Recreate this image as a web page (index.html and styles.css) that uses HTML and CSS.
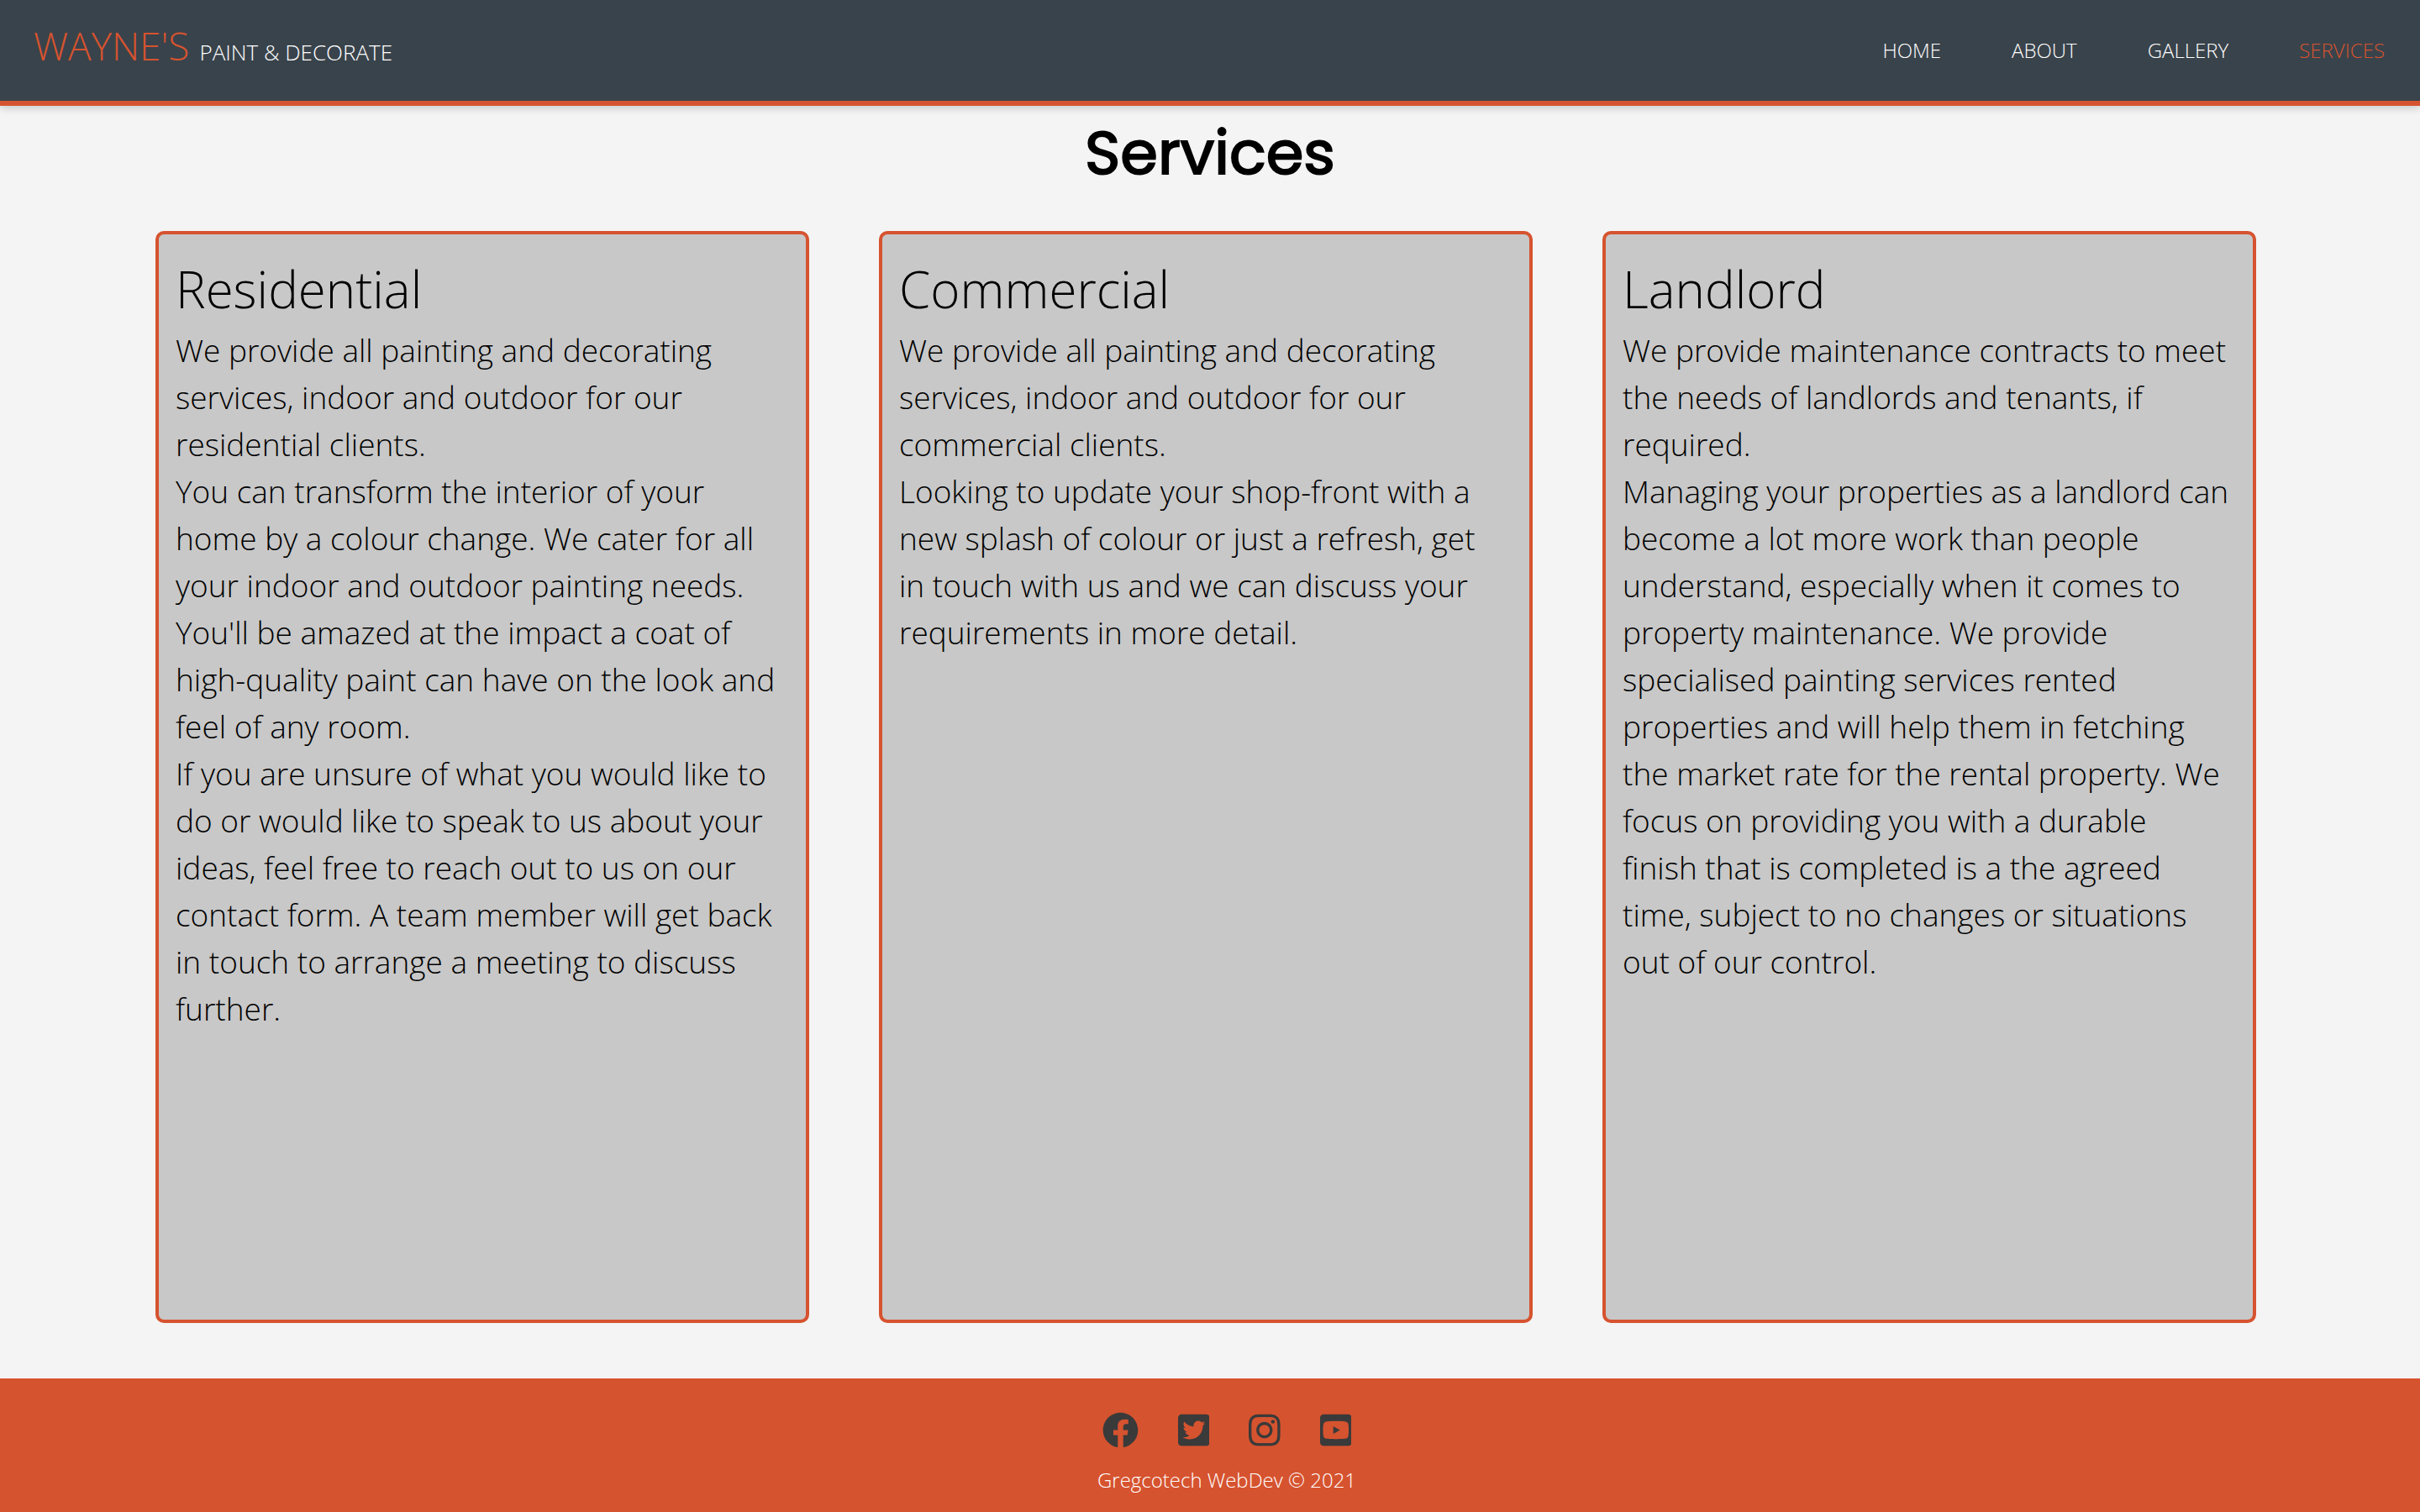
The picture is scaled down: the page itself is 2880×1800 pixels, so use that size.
FILE: index.html
```html
<!DOCTYPE html>
<html lang="en">
<head>
<meta charset="utf-8">
<title>Services</title>
<link rel="stylesheet" href="styles.css">
</head>
<body>
<header class="site-header">
  <a class="brand" href="#"><span class="brand-name">WAYNE'S</span><span>PAINT &amp; DECORATE</span></a>
  <nav class="nav">
    <a href="#">HOME</a>
    <a href="#">ABOUT</a>
    <a href="#">GALLERY</a>
    <a class="current" href="#">SERVICES</a>
  </nav>
</header>
<main class="main">
  <h1 class="title">Services</h1>
  <div class="cards">
    <section class="card">
      <h2>Residential</h2>
      <p>We provide all painting and decorating services, indoor and outdoor for our residential clients.</p>
      <p>You can transform the interior of your home by a colour change. We cater for all your indoor and outdoor painting needs. You'll be amazed at the impact a coat of high-quality paint can have on the look and feel of any room.</p>
      <p>If you are unsure of what you would like to do or would like to speak to us about your ideas, feel free to reach out to us on our contact form. A team member will get back in touch to arrange a meeting to discuss further.</p>
    </section>
    <section class="card">
      <h2>Commercial</h2>
      <p>We provide all painting and decorating services, indoor and outdoor for our commercial clients.</p>
      <p>Looking to update your shop-front with a new splash of colour or just a refresh, get<br> in touch with us and we can discuss your requirements in more detail.</p>
    </section>
    <section class="card">
      <h2>Landlord</h2>
      <p>We provide maintenance contracts to meet the needs of landlords and tenants, if required.</p>
      <p>Managing your properties as a landlord can become a lot more work than people understand, especially when it comes to property maintenance. We provide specialised painting services rented properties and will help them in fetching<br> the market rate for the rental property. We focus on providing you with a durable<br> finish that is completed is a the agreed<br> time, subject to no changes or situations<br> out of our control.</p>
    </section>
  </div>
</main>
<footer class="footer">
  <div class="social">
    <a href="#" aria-label="Facebook"><svg viewBox="0 0 512 512"><path d="M504 256C504 119 393 8 256 8S8 119 8 256c0 123.780 90.690 226.380 209.250 245V327.690h-63V256h63v-54.640c0-62.150 37-96.480 93.670-96.480 27.140 0 55.520 4.840 55.520 4.840v61h-31.280c-30.800 0-40.410 19.120-40.410 38.730V256h68.780l-11 71.690h-57.780V501C413.310 482.380 504 379.780 504 256z"/></svg></a>
    <a href="#" aria-label="Twitter"><svg viewBox="0 0 448 512"><path d="M400 32H48C21.500 32 0 53.500 0 80v352c0 26.500 21.500 48 48 48h352c26.500 0 48-21.500 48-48V80c0-26.500-21.500-48-48-48zm-48.900 158.800c.2 2.800.2 5.700.2 8.500 0 86.700-66 186.600-186.600 186.600-37.200 0-71.700-10.800-100.700-29.400 5.300.6 10.400.8 15.800.8 30.700 0 58.900-10.400 81.400-28-28.800-.6-53-19.500-61.300-45.500 10.100 1.500 19.200 1.500 29.600-1.200-30-6.100-52.500-32.500-52.500-64.400v-.8c8.700 4.900 18.900 7.900 29.600 8.300a65.447 65.447 0 0 1-29.200-54.600c0-12.200 3.200-23.400 8.900-33.100 32.300 39.800 80.800 65.800 135.200 68.600-9.300-44.500 24-80.600 64-80.600 18.900 0 35.900 7.900 47.900 20.700 14.800-2.800 29-8.300 41.600-15.800-4.900 15.200-15.200 28-28.800 36.100 13.200-1.400 26-5.100 37.800-10.200-8.900 13.100-20.100 24.700-32.900 34z"/></svg></a>
    <a href="#" aria-label="Instagram"><svg viewBox="0 0 448 512"><path d="M224.100 141c-63.600 0-114.900 51.300-114.900 114.900s51.300 114.900 114.900 114.900S339 319.500 339 255.900 287.700 141 224.100 141zm0 189.600c-41.100 0-74.700-33.500-74.700-74.700s33.500-74.700 74.700-74.700 74.700 33.500 74.700 74.700-33.600 74.700-74.700 74.700zm146.400-194.300c0 14.900-12 26.800-26.800 26.800-14.900 0-26.800-12-26.800-26.800s12-26.800 26.800-26.800 26.800 12 26.800 26.800zm76.100 27.200c-1.700-35.900-9.900-67.700-36.200-93.900-26.200-26.200-58-34.400-93.900-36.200-37-2.100-147.900-2.100-184.900 0-35.800 1.700-67.600 9.900-93.900 36.100s-34.400 58-36.200 93.900c-2.100 37-2.100 147.900 0 184.900 1.700 35.900 9.900 67.700 36.200 93.900s58 34.400 93.900 36.200c37 2.100 147.900 2.100 184.900 0 35.900-1.700 67.700-9.900 93.900-36.200 26.200-26.200 34.400-58 36.200-93.900 2.100-37 2.100-147.800 0-184.800zM398.800 388c-7.800 19.600-22.900 34.700-42.600 42.600-29.500 11.700-99.500 9-132.100 9s-102.700 2.600-132.100-9c-19.600-7.800-34.700-22.900-42.600-42.600-11.700-29.500-9-99.500-9-132.100s-2.600-102.700 9-132.100c7.800-19.600 22.900-34.700 42.600-42.600 29.500-11.700 99.500-9 132.100-9s102.700-2.600 132.100 9c19.600 7.800 34.700 22.900 42.600 42.600 11.700 29.500 9 99.500 9 132.100s2.700 102.700-9 132.100z"/></svg></a>
    <a href="#" aria-label="YouTube"><svg viewBox="0 0 448 512"><path d="M186.800 202.100l95.200 54.100-95.200 54.100V202.100zM448 80v352c0 26.500-21.500 48-48 48H48c-26.500 0-48-21.500-48-48V80c0-26.500 21.500-48 48-48h352c26.500 0 48 21.500 48 48zm-42 176.300s0-59.600-7.600-88.200c-4.200-15.800-16.500-28.200-32.200-32.400C337.900 128 224 128 224 128s-113.900 0-142.200 7.700c-15.700 4.200-28 16.600-32.200 32.400-7.600 28.500-7.600 88.200-7.600 88.200s0 59.600 7.600 88.200c4.200 15.800 16.500 27.700 32.200 31.900C110.100 384 224 384 224 384s113.900 0 142.200-7.700c15.700-4.200 28-16.100 32.200-31.900 7.600-28.500 7.600-88.100 7.600-88.100z"/></svg></a>
  </div>
  <p class="credit">Gregcotech WebDev © 2021</p>
</footer>
</body>
</html>
```
FILE: styles.css
```css
* { box-sizing: border-box; margin: 0; padding: 0; }
body {
  min-height: 100vh;
  display: flex;
  flex-direction: column;
  background: #f4f4f4;
  color: #000;
  font-family: "Open Sans", sans-serif;
  font-weight: 300;
}
a { color: inherit; text-decoration: none; }
.site-header {
  display: flex;
  justify-content: space-between;
  align-items: flex-start;
  padding: 24px 42px 28px 40px;
  background: #39434b;
  border-bottom: 6px solid #d6532f;
  box-shadow: 0 2px 10px rgba(0, 0, 0, 0.2);
  color: #fff;
}
.brand { display: flex; align-items: baseline; gap: 12px; font-size: 26px; line-height: 60px; }
.brand-name { font-size: 46px; color: #d6532f; }
.nav { display: flex; gap: 84px; padding-top: 20px; font-size: 24px; line-height: 32px; }
.nav .current { color: #d6532f; }
.main { flex: 1; display: flex; flex-direction: column; padding-top: 16px; }
.title {
  font-family: Poppins, "Open Sans", sans-serif;
  font-size: 72px;
  font-weight: 400;
  line-height: 80px;
  text-align: center;
  -webkit-text-stroke: 2px #000;
}
.cards { flex: 1; display: grid; grid-template-columns: repeat(3, 1fr); gap: 83px; margin: 53px 195px 66px 185px; }
.card { padding: 20px; border: 4px solid #d6532f; border-radius: 10px; background: #c8c8c8; }
.card h2 { font-size: 60px; font-weight: 300; line-height: 90px; }
.card p { font-size: 37px; line-height: 56px; }
.footer { padding: 40px 0 20px 40px; background: #d6532f; text-align: center; }
.social { display: flex; justify-content: center; gap: 47px; }
.social svg { display: block; height: 43px; fill: #3a3a3a; }
.credit { margin-top: 20px; color: #fff; font-size: 24px; line-height: 36px; }
```
